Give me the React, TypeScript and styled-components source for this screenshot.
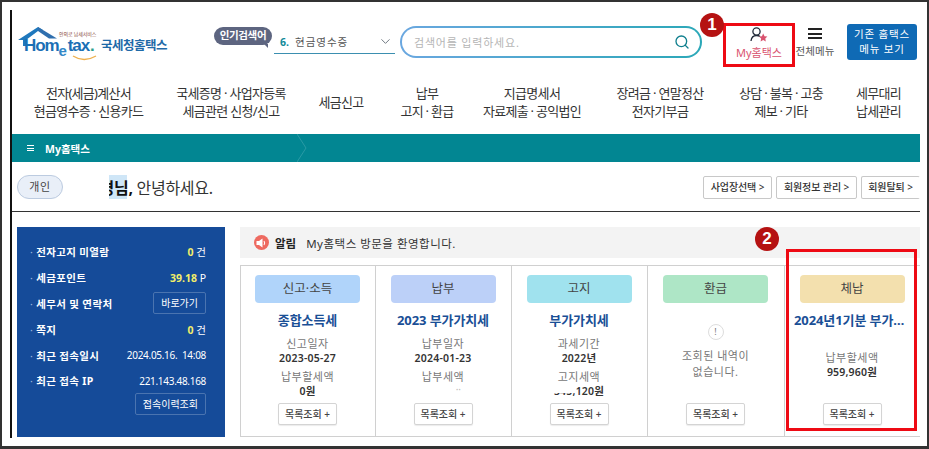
import * as React from "react";
import styled, {createGlobalStyle} from "styled-components";
import {Search, ChevronDown} from "lucide-react";

const FONT = `"Noto Sans", "Noto Sans CJK KR", sans-serif`;

const GlobalStyle = createGlobalStyle`
	html, body {
		margin: 0;
		padding: 0;
		background: #fff;
		font-family: ${FONT};
		color: #222;
	}
	* {
		box-sizing: border-box;
	}
`

const NAV_ITEMS = [
	{width: 153, lines: ["전자(세금)계산서", "현금영수증 · 신용카드"]},
	{width: 132, lines: ["국세증명 · 사업자등록", "세금관련 신청/신고"]},
	{width: 88, lines: ["세금신고"]},
	{width: 84, lines: ["납부", "고지 · 환급"]},
	{width: 126, lines: ["지급명세서", "자료제출 · 공익법인"]},
	{width: 130, lines: ["장려금 · 연말정산", "전자기부금"]},
	{width: 112, lines: ["상담 · 불복 · 고충", "제보 · 기타"]},
	{width: 83, lines: ["세무대리", "납세관리"]},
]

const SIDE_ROWS = [
	{label: "전자고지 미열람", value: "0", unit: "건"},
	{label: "세금포인트", value: "39.18", unit: "P"},
	{label: "세무서 및 연락처", button: "바로가기"},
	{label: "쪽지", value: "0", unit: "건"},
	{label: "최근 접속일시", text: "2024.05.16.  14:08"},
	{label: "최근 접속 IP", text: "221.143.48.168"},
]

const Logo = () => (
	<LogoWrap>
		<svg width="40" height="22" viewBox="0 0 40 22">
			<path d="M0 14 L20 1 L25 4 L20 5 L8 14 V20 H5 V14 Z" fill="#1f78bd" />
			<path d="M20 1 L39 12.5 L31 12.5 L20 5 Z" fill="#2f6fae" />
		</svg>
		<LogoTag>안의로 납세서비스</LogoTag>
		<LogoWord>Hom<LogoE>e</LogoE>tax<LogoDot>.</LogoDot></LogoWord>
		<LogoSmile width="25" height="6" viewBox="0 0 25 6">
			<path d="M1 1 Q12 8 24 1" fill="none" stroke="#eeb04e" strokeWidth="1.4" />
		</LogoSmile>
		<LogoName>국세청홈택스</LogoName>
	</LogoWrap>
)

const UserIcon = () => (
	<svg width="18" height="18" viewBox="0 0 18 18">
		<circle cx="6.5" cy="5.5" r="3.6" fill="none" stroke="#222a3a" strokeWidth="1.3" />
		<path d="M1 15 C1.5 10.5 4 9.5 6.5 9.5 C8 9.5 9.2 9.9 10 10.6" fill="none" stroke="#222a3a" strokeWidth="1.3" />
		<path d="M13.2 7.5 L14.5 10.2 L17.4 10.6 L15.3 12.6 L15.8 15.5 L13.2 14.1 L10.6 15.5 L11.1 12.6 L9 10.6 L11.9 10.2 Z" fill="#d9536f" />
	</svg>
)

const SpeakerIcon = () => (
	<SpeakerCircle>
		<svg width="11" height="10" viewBox="0 0 11 10">
			<path d="M0.5 3 H3 L6.5 0.6 V9.4 L3 7 H0.5 Z" fill="#fff" />
			<path d="M8 3 Q9.4 5 8 7" fill="none" stroke="#fff" strokeWidth="1.1" />
		</svg>
	</SpeakerCircle>
)

const App = () => {
	return (
		<Frame>
			<GlobalStyle />
			<Main>

				<Header>
					<Logo />

					<PopularBadge>인기검색어</PopularBadge>

					<PopularSelect>
						<PopularNum>6.</PopularNum>
						<PopularText>현금영수증</PopularText>
						<ChevronDown size={15} strokeWidth={1.5} color="#66707a" />
					</PopularSelect>

					<SearchBox>
						<Placeholder>검색어를 입력하세요.</Placeholder>
						<Search size={16} strokeWidth={2} color="#0f7f8e" />
					</SearchBox>

					<MyHometax>
						<UserIcon />
						<MyLabel>My홈택스</MyLabel>
					</MyHometax>

					<AllMenu>
						<Burger><i /><i /><i /></Burger>
						<AllMenuLabel>전체메뉴</AllMenuLabel>
					</AllMenu>

					<OldMenuButton>기존 홈택스<br />메뉴 보기</OldMenuButton>
				</Header>

				<Nav>
					{NAV_ITEMS.map((item, i) => (
						<NavItem key={i} $width={item.width}>
							{item.lines.map((line, j) => <div key={j}>{line}</div>)}
						</NavItem>
					))}
				</Nav>

				<TealBar>
					<TealTitle>
						<BarIcon><i /><i /><i /></BarIcon>
						My홈택스
					</TealTitle>
					<TealChevron width="10" height="28" viewBox="0 0 10 28">
						<path d="M0 0 L9 14 L0 28" fill="none" stroke="#2a9aa5" strokeWidth="1" />
					</TealChevron>
				</TealBar>

				<Greeting>
					<TypePill>개인</TypePill>
					<Hello>
						<NameClip><span>경</span></NameClip>
						<b>님,</b> 안녕하세요.
					</Hello>
					<GreetingActions>
						<ActionButton $width={69}>사업장선택 &gt;</ActionButton>
						<ActionButton $width={81}>회원정보 관리 &gt;</ActionButton>
						<ActionButton $width={59} $cut>회원탈퇴 &gt;</ActionButton>
					</GreetingActions>
				</Greeting>

				<Body>
					<SidePanel>
						{SIDE_ROWS.map((row, i) => (
							<SideRow key={i}>
								<SideLabel>{row.label}</SideLabel>
								{row.value && <SideValue><em>{row.value}</em> {row.unit}</SideValue>}
								{row.text && <SideText>{row.text}</SideText>}
								{row.button && <SideButton>{row.button}</SideButton>}
							</SideRow>
						))}
						<SideBottom>
							<SideButton>접속이력조회</SideButton>
						</SideBottom>
					</SidePanel>

					<Content>
						<Notice>
							<SpeakerIcon />
							<NoticeTitle>알림</NoticeTitle>
							<span>My홈택스 방문을 환영합니다.</span>
						</Notice>

						<Cards>
							<Card>
								<CardHead $bg="#b0d4fa">신고·소득</CardHead>
								<CardTitle>종합소득세</CardTitle>
								<InfoLabel>신고일자</InfoLabel>
								<InfoValue>2023-05-27</InfoValue>
								<InfoLabel $next>납부할세액</InfoLabel>
								<InfoValue>0원</InfoValue>
								<ListButton>목록조회 +</ListButton>
							</Card>
							<Card>
								<CardHead $bg="#bcd0f8">납부</CardHead>
								<CardTitle>2023 부가가치세</CardTitle>
								<InfoLabel>납부일자</InfoLabel>
								<InfoValue>2024-01-23</InfoValue>
								<InfoLabel $next>납부세액</InfoLabel>
								<HiddenValue>··</HiddenValue>
								<ListButton>목록조회 +</ListButton>
							</Card>
							<Card>
								<CardHead $bg="#a0e2ee">고지</CardHead>
								<CardTitle>부가가치세</CardTitle>
								<InfoLabel>과세기간</InfoLabel>
								<InfoValue>2022년</InfoValue>
								<InfoLabel $next>고지세액</InfoLabel>
								<InfoValue><CutDigits>345,</CutDigits>120원</InfoValue>
								<ListButton>목록조회 +</ListButton>
							</Card>
							<Card>
								<CardHead $bg="#aee6c6">환급</CardHead>
								<EmptyMark>!</EmptyMark>
								<EmptyText>조회된 내역이<br />없습니다.</EmptyText>
								<ListButton>목록조회 +</ListButton>
							</Card>
							<Card>
								<CardHead $bg="#f3e0ae">체납</CardHead>
								<CardTitle $wide>2024년1기분 부가가치세</CardTitle>
								<InfoLabel $far>납부할세액</InfoLabel>
								<InfoValue>959,960원</InfoValue>
								<ListButton>목록조회 +</ListButton>
							</Card>
						</Cards>
					</Content>
				</Body>
			</Main>

			<RedBox $left={721} $top={21} $width={72} $height={44} />
			<RedBox $left={784} $top={247} $width={131} $height={182} />
			<NumberBadge $left={700} $top={13}>1</NumberBadge>
			<NumberBadge $left={755} $top={227}>2</NumberBadge>
		</Frame>
	)
}

const Frame = styled.div`
	position: relative;
	width: 929px;
	height: 449px;
	border: solid #333;
	border-width: 2px 2px 3px 2px;
	padding: 8px 7px 8px 8px;
	overflow: hidden;
`

const Main = styled.div`
	width: 910px;
	height: 428px;
	border-left: 2px solid #111;
	overflow: hidden;
`

const Header = styled.div`
	display: flex;
	align-items: flex-start;
	height: 68px;
`

const LogoWrap = styled.div`
	position: relative;
	width: 200px;
	height: 50px;
	margin: 16px 0 0 6px;
	flex: none;
`

const LogoTag = styled.span`
	position: absolute;
	left: 41px;
	top: 5px;
	font-size: 5px;
	line-height: 7px;
	letter-spacing: -0.1px;
	color: #8a4a3a;
	white-space: nowrap;
`

const LogoWord = styled.span`
	position: absolute;
	left: 6px;
	top: 10px;
	font: bold 17px/20px "Liberation Sans", sans-serif;
	letter-spacing: -1.1px;
	color: #1a6fb5;
`

const LogoE = styled.span`
	position: relative;
	top: 5px;
	margin-right: 2px;
	font-size: 15px;
	color: #3388c8;
`

const LogoDot = styled.span`
	margin-left: 1px;
	color: #2ba18f;
`

const LogoSmile = styled.svg`
	position: absolute;
	left: 54px;
	top: 29px;
`

const LogoName = styled.span`
	position: absolute;
	left: 83px;
	top: 11px;
	font-size: 12.5px;
	line-height: 18px;
	font-weight: 700;
	letter-spacing: -0.5px;
	color: #1f6aa8;
	white-space: nowrap;
`

const PopularBadge = styled.div`
	position: relative;
	width: 58px;
	height: 18px;
	margin: 17px 0 0 -4px;
	flex: none;
	border-radius: 9px;
	background: #5d6580;
	color: #fff;
	font-size: 10.5px;
	line-height: 17px;
	font-weight: 700;
	letter-spacing: -0.4px;
	text-align: center;
	&:after {
		content: "";
		position: absolute;
		right: 4px;
		bottom: -3px;
		border-left: 4px solid transparent;
		border-top: 4px solid #5d6580;
	}
`

const PopularSelect = styled.div`
	display: flex;
	align-items: center;
	width: 121px;
	height: 24px;
	margin: 20px 0 0 2px;
	padding: 0 0 0 6px;
	flex: none;
	border-bottom: 1px solid #3b8fb0;
	font-size: 10.5px;
	svg {
		margin-left: auto;
		margin-right: 2px;
	}
`

const PopularNum = styled.span`
	color: #128a98;
	font-weight: 700;
	margin-right: 6px;
`

const PopularText = styled.span`
	color: #555;
	letter-spacing: 1px;
`

const SearchBox = styled.div`
	display: flex;
	align-items: center;
	justify-content: space-between;
	width: 302px;
	height: 32px;
	margin: 16px 0 0 5px;
	padding: 0 10px 0 12px;
	flex: none;
	border: 2px solid transparent;
	border-radius: 16px;
	background: linear-gradient(#fff, #fff) padding-box, linear-gradient(90deg, #6aa7e0, #2ba8b8) border-box;
`

const Placeholder = styled.span`
	font-size: 11px;
	letter-spacing: 0.8px;
	color: #b5b5b5;
`

const MyHometax = styled.div`
	display: flex;
	flex-direction: column;
	align-items: center;
	width: 70px;
	margin: 16px 0 0 22px;
	flex: none;
`

const MyLabel = styled.span`
	margin-top: 1px;
	font-size: 11px;
	line-height: 15px;
	color: #d9536f;
	white-space: nowrap;
`

const AllMenu = styled.div`
	display: flex;
	flex-direction: column;
	align-items: center;
	width: 44px;
	margin: 18px 0 0 -1px;
	flex: none;
`

const Burger = styled.div`
	display: flex;
	flex-direction: column;
	gap: 2.5px;
	width: 14px;
	i {
		display: block;
		height: 2px;
		background: #222;
	}
`

const AllMenuLabel = styled.span`
	margin-top: 5px;
	font-size: 10.5px;
	line-height: 14px;
	letter-spacing: 0.1px;
	color: #555;
	white-space: nowrap;
`

const OldMenuButton = styled.div`
	width: 70px;
	height: 36px;
	margin: 14px 0 0 10px;
	flex: none;
	border-radius: 3px;
	background: #0f6ab5;
	color: #fff;
	font-size: 10.5px;
	line-height: 15px;
	letter-spacing: 0.8px;
	padding-top: 3px;
	text-align: center;
`

const Nav = styled.div`
	display: flex;
	height: 56px;
	padding-bottom: 9px;
`

const NavItem = styled.div<{$width: number}>`
	display: flex;
	flex-direction: column;
	justify-content: center;
	width: ${(props) => props.$width}px;
	flex: none;
	font-size: 13px;
	line-height: 18px;
	letter-spacing: -0.7px;
	color: #333;
	text-align: center;
	white-space: nowrap;
`

const TealBar = styled.div`
	position: relative;
	display: flex;
	align-items: center;
	height: 28px;
	background: #028692;
`

const TealTitle = styled.div`
	display: flex;
	align-items: center;
	margin-left: 15px;
	font-size: 10.5px;
	font-weight: 700;
	letter-spacing: 0;
	color: #fff;
`

const BarIcon = styled.span`
	display: flex;
	flex-direction: column;
	gap: 1.5px;
	width: 7px;
	margin-right: 11px;
	i {
		display: block;
		height: 1px;
		background: #fff;
	}
`

const TealChevron = styled.svg`
	position: absolute;
	left: 285px;
	top: 0;
`

const Greeting = styled.div`
	display: flex;
	align-items: center;
	height: 50px;
	padding: 1px 0 0 5px;
	border-bottom: 1px solid #333;
`

const TypePill = styled.div`
	width: 46px;
	height: 24px;
	border: 1px solid #bccbe0;
	border-radius: 12px;
	background: #e9eff8;
	font-size: 11px;
	line-height: 22px;
	letter-spacing: 0.6px;
	color: #444;
	text-align: center;
`

const Hello = styled.div`
	display: flex;
	align-items: baseline;
	margin-left: 46px;
	font-size: 16px;
	letter-spacing: -0.3px;
	color: #333;
	white-space: pre;
	b {
		color: #111;
		background: linear-gradient(90deg, #cfe6f7 70%, transparent 70%);
	}
`

const NameClip = styled.span`
	display: inline-flex;
	justify-content: flex-end;
	width: 5px;
	overflow: hidden;
	font-weight: 700;
	color: #111;
	background: #cfe6f7;
	span {
		flex: none;
	}
`

const GreetingActions = styled.div`
	display: flex;
	gap: 4px;
	margin-left: auto;
`

const ActionButton = styled.div<{$width: number; $cut?: boolean}>`
	width: ${(props) => props.$width}px;
	height: 23px;
	border: 1px solid #c8c8c8;
	border-right-color: ${(props) => props.$cut ? "transparent" : "#c8c8c8"};
	border-radius: 2px;
	background: #fff;
	font-size: 10px;
	line-height: 21px;
	font-weight: 500;
	letter-spacing: -0.1px;
	color: #333;
	text-align: center;
	white-space: nowrap;
`

const Body = styled.div`
	display: flex;
	gap: 15px;
	padding: 15px 0 0 5px;
`

const SidePanel = styled.div`
	width: 208px;
	height: 210px;
	flex: none;
	padding: 12px 19px 0 13px;
	background: #154b99;
`

const SideRow = styled.div`
	display: flex;
	align-items: center;
	justify-content: space-between;
	height: 26px;
	margin-top: -0.2px;
	color: #fff;
	font-size: 10.5px;
	white-space: pre;
`

const SideLabel = styled.span`
	font-weight: 700;
	letter-spacing: 0.35px;
	&:before {
		content: "·";
		margin-right: 3px;
		font-weight: 400;
		color: #9db8dc;
	}
`

const SideValue = styled.span`
	font-size: 10.5px;
	em {
		font-style: normal;
		font-weight: 700;
		color: #f2ee6a;
	}
`

const SideText = styled.span`
	font-size: 10px;
	letter-spacing: -0.3px;
`

const SideButton = styled.div`
	height: 22px;
	padding: 0 7px;
	border: 1px solid #4a74b0;
	border-radius: 2px;
	font-size: 10px;
	font-weight: 400;
	line-height: 20px;
	color: #fff;
`

const SideBottom = styled.div`
	display: flex;
	justify-content: flex-end;
	margin-top: -1px;
`

const Content = styled.div`
	width: 680px;
	flex: none;
`

const Notice = styled.div`
	display: flex;
	align-items: center;
	height: 31px;
	padding-left: 14px;
	background: #f3f3f3;
	font-size: 11.5px;
	letter-spacing: 0.5px;
	color: #333;
`

const SpeakerCircle = styled.span`
	display: flex;
	align-items: center;
	justify-content: center;
	width: 15px;
	height: 15px;
	margin-right: 6px;
	border-radius: 50%;
	background: #ee6a60;
`

const NoticeTitle = styled.b`
	margin-right: 10px;
	font-weight: 700;
	letter-spacing: 0;
	color: #222;
`

const Cards = styled.div`
	display: grid;
	grid-template-columns: 135px 136px 136px 137px 136px;
	height: 172px;
	margin-top: 7px;
	border-top: 1px solid #d0d0d0;
	border-bottom: 1px solid #d0d0d0;
`

const Card = styled.div`
	display: flex;
	flex-direction: column;
	align-items: center;
	height: 170px;
	padding: 9px 1px 11px 0;
	border-left: 1px solid #d0d0d0;
`

const CardHead = styled.div<{$bg: string}>`
	width: 105px;
	height: 28px;
	flex: none;
	border-radius: 4px;
	background: ${(props) => props.$bg};
	font-size: 12.5px;
	line-height: 28px;
	color: #444;
	text-align: center;
`

const CardTitle = styled.div<{$wide?: boolean}>`
	width: ${(props) => props.$wide ? "116px" : "120px"};
	margin-top: 7px;
	font-size: 13px;
	line-height: 20px;
	font-weight: 700;
	letter-spacing: -0.1px;
	color: #1a4f96;
	text-align: center;
	white-space: nowrap;
	overflow: hidden;
	text-overflow: ellipsis;
`

const InfoLabel = styled.div<{$next?: boolean; $far?: boolean}>`
	margin-top: ${(props) => props.$far ? "20px" : props.$next ? "3px" : "6px"};
	font-size: 11px;
	line-height: 15px;
	letter-spacing: 0.5px;
	color: #777;
`

const InfoValue = styled.div`
	font-size: 10.5px;
	line-height: 15px;
	font-weight: 600;
	letter-spacing: 0.2px;
	color: #333;
`

const HiddenValue = styled.div`
	width: 40px;
	height: 15px;
	padding-right: 2px;
	font-size: 10px;
	line-height: 10px;
	color: #bbb;
	text-align: right;
`

const CutDigits = styled.span`
	clip-path: inset(65% 0 0 0);
`

const EmptyMark = styled.div`
	width: 16px;
	height: 16px;
	margin-top: 21px;
	border: 1px solid #ddd;
	border-radius: 50%;
	font-size: 9px;
	line-height: 14px;
	color: #777;
	text-align: center;
`

const EmptyText = styled.div`
	margin-top: 8px;
	font-size: 11px;
	line-height: 16px;
	letter-spacing: 0.5px;
	color: #777;
	text-align: center;
`

const ListButton = styled.div`
	width: 59px;
	height: 22px;
	margin-top: auto;
	border: 1px solid #d4d4d4;
	border-radius: 2px;
	box-shadow: 0 1px 1px rgba(0, 0, 0, 0.08);
	background: #fff;
	font-size: 10px;
	line-height: 20px;
	font-weight: 500;
	color: #444;
	text-align: center;
	white-space: nowrap;
`

const RedBox = styled.div<{$left: number; $top: number; $width: number; $height: number}>`
	position: absolute;
	left: ${(props) => props.$left}px;
	top: ${(props) => props.$top}px;
	width: ${(props) => props.$width}px;
	height: ${(props) => props.$height}px;
	border: 3px solid #ee0a14;
`

const NumberBadge = styled.div<{$left: number; $top: number}>`
	position: absolute;
	left: ${(props) => props.$left - 2}px;
	top: ${(props) => props.$top - 2}px;
	width: 24px;
	height: 24px;
	border-radius: 50%;
	background: #b51212;
	font: bold 17px/24px "Liberation Sans", sans-serif;
	color: #fff;
	text-align: center;
`

export default App;
